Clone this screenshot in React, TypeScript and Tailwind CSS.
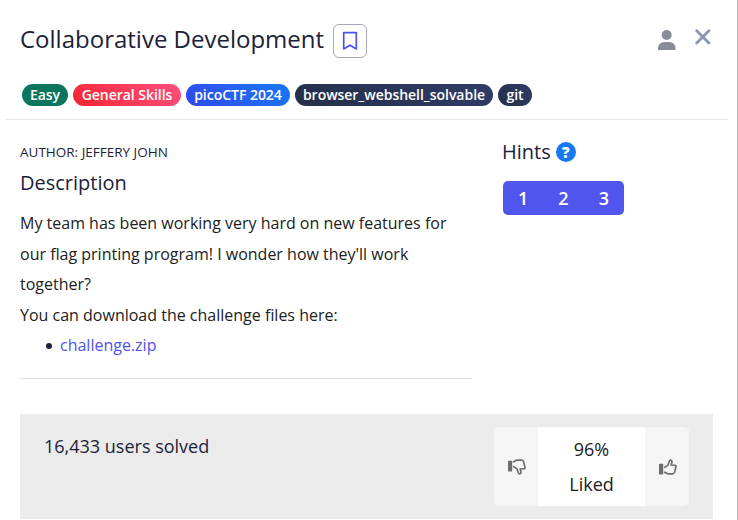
import React from "react";

const tags = [
  { label: "Easy", look: "w-[46px] bg-[#0b755e]" },
  { label: "General Skills", look: "w-[108px] bg-linear-45 from-[#f5222d] to-[#ff4d7d]" },
  { label: "picoCTF 2024", look: "w-[104px] bg-linear-45 from-[#2f48eb] to-[#1677f5]" },
  { label: "browser_webshell_solvable", look: "w-[198px] bg-linear-45 from-[#242f49] to-[#2f3c68]" },
  { label: "git", look: "w-[34px] bg-linear-45 from-[#242f49] to-[#2f3c68]" },
];

function Thumb({ barY }: { barY: number }) {
  return (
    <svg width="20" height="18" viewBox="0 0 20 18" fill="none" aria-hidden="true">
      <rect x="1" y={barY} width="4.2" height="10.8" rx="0.8" fill="#6d6d6d" />
      <path
        d="M6.7 9.4 10 7.1l1.3-3.9c.4-1.1 1.400-1.300 2.100-.8.700.5.700 1.300.5 2.200L13.100 7l4.200.3c.6.1.8.6.7 1.200l-1.300 5.400c-.3 1.200-.9 1.800-2.100 1.900l-4.100.1c-1.500 0-2.400-.9-3.800-1.700"
        stroke="#6d6d6d"
        strokeWidth="1.7"
        strokeLinecap="round"
        strokeLinejoin="round"
      />
    </svg>
  );
}

export default function App() {
  return (
    <div className="relative h-[520px] w-[738px] overflow-hidden border-r border-[#b5b5b5] bg-white font-['Open_Sans',sans-serif] text-[#1b2238]">
      <header className="ml-[5px] mr-[9px] h-[120px] border-b border-[#e6e6e6] pl-[15px]">
        <div className="flex h-[84px] items-start pt-6">
          <h1 className="w-[313px] whitespace-nowrap text-[24px] leading-[29px]">Collaborative Development</h1>
          <button className="flex size-[34px] items-center justify-center rounded-[6px] border border-[#a2a8b1]" aria-label="Bookmark">
            <svg width="16" height="20" viewBox="0 0 16 20" fill="none">
              <path d="M1.700 1.700h12.600v16.200L8 14.200l-6.300 3.700z" stroke="#4f53ee" strokeWidth="1.700" strokeLinejoin="round" />
            </svg>
          </button>
          <svg className="ml-[291px] mt-[6px]" width="18" height="20" viewBox="0 0 18 20" fill="#888b98">
            <circle cx="8.700" cy="5" r="5" />
            <path d="M0 20v-2a6 6 0 0 1 6-6h5.500a6 6 0 0 1 6 6v2z" />
          </svg>
          <svg className="ml-[19px] mt-[5px]" width="16" height="16" viewBox="0 0 16 16" fill="none">
            <path d="m1.700 1.700 12.200 12.200m0-12.200L1.700 13.900" stroke="#8a96b2" strokeWidth="2.800" strokeLinecap="round" />
          </svg>
        </div>
        <div className="ml-[2px] flex gap-[5px]">
          {tags.map((tag) => (
            <span key={tag.label} className={`flex h-[22px] items-center justify-center rounded-full whitespace-nowrap text-[14px] leading-[22px] font-semibold tracking-[-0.03px] text-white ${tag.look}`}>
              {tag.label}
            </span>
          ))}
        </div>
      </header>

      <main className="flex h-[294px] pl-5">
        <section className="h-[259px] w-[452px] border-b border-[#dedede] pt-[22px]">
          <p className="text-[13.5px] leading-5">AUTHOR: JEFFERY JOHN</p>
          <h2 className="pt-[6px] text-[20px] leading-[30px]">Description</h2>
          <div className="w-[440px] pt-[10px] text-[16px] leading-[30.5px] text-[#212121]">
            <p>My team has been working very hard on new features for<br />our flag printing program! I wonder how they'll work<br />together?</p>
            <p>You can download the challenge files here:</p>
            <div className="flex items-center pl-[26px]">
              <span className="mt-[2px] mr-2 size-[6px] rounded-full bg-[#1b2238]" />
              <a className="text-[#4f53ee]">challenge.zip</a>
            </div>
          </div>
        </section>
        <section className="ml-[31px] pt-[17px]">
          <div className="-ml-px flex items-center gap-[5px]">
            <h2 className="text-[20px] leading-[30px]">Hints</h2>
            <span className="flex size-5 items-center justify-center rounded-full bg-[#1877f2] text-[15px] leading-5 font-extrabold text-white"><span className="-mt-px">?</span></span>
          </div>
          <div className="mt-[14px] grid h-[34px] w-[121px] grid-cols-3 items-center rounded-[5px] bg-[#5055ed] text-center text-[18px] font-semibold text-white">
            <span>1</span><span>2</span><span>3</span>
          </div>
        </section>
      </main>

      <footer className="ml-5 flex h-[105px] w-[693px] justify-between bg-[#ebebeb] pr-6 pl-6">
        <p className="pt-[18px] text-[18px] leading-[29px]">16,433 users solved</p>
        <div className="mt-[13px] flex h-[79px] w-[195px] overflow-hidden rounded-[5px] bg-[#f5f5f5]">
          <button className="flex w-[44px] items-center justify-center pt-px pl-[2px]" aria-label="Dislike">
            <span className="-scale-y-100"><Thumb barY={4.5} /></span>
          </button>
          <div className="w-[107px] bg-white pt-[5px] text-center text-[18px] leading-[35px] text-[#212121]">
            <p>96%</p><p>Liked</p>
          </div>
          <button className="flex w-[44px] items-center justify-center pt-px pl-[2px]" aria-label="Like"><Thumb barY={5.7} /></button>
        </div>
      </footer>
      <span className="absolute top-[304px] -right-px h-[3px] w-px bg-[#222]" />
    </div>
  );
}
